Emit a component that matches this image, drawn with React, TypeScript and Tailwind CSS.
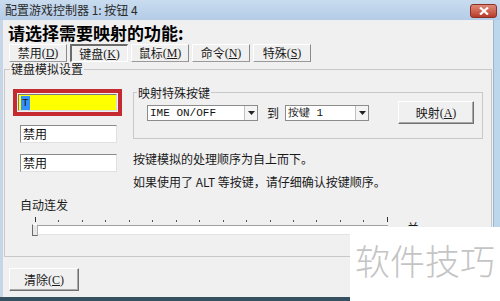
import React from "react";

const cjk = "font-['Noto_Sans_CJK_SC',sans-serif]";

function Acc({ k }: { k: string }) {
  return (
    <span className="font-['Liberation_Serif',serif] text-[12px]">
      (<span className="underline">{k}</span>)
    </span>
  );
}

function Tab({ label, k, active }: { label: string; k: string; active?: boolean }) {
  return (
    <div
      className={
        "w-[58px] h-[18px] flex items-center justify-center whitespace-nowrap text-[12px] leading-[12px] text-[#1a1a1a] " +
        (active
          ? "border-t-2 border-l-2 border-t-[#6a6a6a] border-l-[#6a6a6a] border-b border-r border-b-[#ffffff] border-r-[#ffffff] bg-[#f0f0f0]"
          : "border-t border-l border-t-[#ffffff] border-l-[#ffffff] border-b border-r border-b-[#9a9a9a] border-r-[#8a8a8a] bg-[#f0f0f0]")
      }
    >
      <span>{label}</span>
      <Acc k={k} />
    </div>
  );
}

function Select({ text, w }: { text: string; w: string }) {
  return (
    <div className={"h-[16px] bg-white border border-[#8c8c8c] flex items-center justify-between " + w}>
      <span className="pl-[2px] text-[11px] leading-[12px] font-['Liberation_Mono',monospace] text-[#111] whitespace-nowrap">
        {text}
      </span>
      <div className="w-[13px] h-[14px] border-l border-[#c0c0c0] bg-[#f4f4f4] flex items-center justify-center">
        <svg width="7" height="4" viewBox="0 0 7 4">
          <path d="M0 0 L7 0 L3.5 4 Z" fill="#222" />
        </svg>
      </div>
    </div>
  );
}

function Btn({ label, k, w }: { label: string; k: string; w: string }) {
  return (
    <div
      className={
        "h-[23px] flex items-center justify-center whitespace-nowrap text-[12px] leading-[12px] text-[#1a1a1a] bg-[#f0f0f0] border border-t-[#ffffff] border-l-[#ffffff] border-b-[#707070] border-r-[#707070] shadow-[inset_-1px_-1px_0_#a8a8a8] " +
        w
      }
    >
      <span>{label}</span>
      <Acc k={k} />
    </div>
  );
}

export default function App() {
  const ticks = Array.from({ length: 16 });
  return (
    <div className={"relative w-[500px] h-[301px] overflow-hidden flex flex-col bg-[#f0f0f0] " + cjk}>
      {/* title bar */}
      <div className="h-[20px] flex items-center justify-between bg-gradient-to-b from-[#c9dcef] to-[#b4cce7]">
        <span className="pl-[5px] text-[12px] leading-[12px] text-[#2a2a2a]">配置游戏控制器 1: 按钮 4</span>
        <div className="mr-[3px] mt-[1px] w-[27px] h-[14px] rounded-[3px] border border-[#8a3024] bg-gradient-to-b from-[#e08a78] to-[#b93a2a] flex items-center justify-center">
          <svg width="10" height="8" viewBox="0 0 10 8">
            <path d="M1 0.5 L9 7.5 M9 0.5 L1 7.5" stroke="#ffffff" strokeWidth="2.2" />
          </svg>
        </div>
      </div>

      <div className="flex flex-1">
        <div className="w-[3px] bg-[#c6d6e6]" />
        <div className="flex-1 flex flex-col bg-[#f0f0f0]">
          <div className="pl-[5px] mt-[4px] h-[18px] text-[17px] leading-[18px] font-bold text-[#000] whitespace-nowrap">
            请选择需要映射的功能:
          </div>
          <div className="mt-[2px] pl-[6px] flex gap-[3px]">
            <Tab label="禁用" k="D" />
            <Tab label="键盘" k="K" active />
            <Tab label="鼠标" k="M" />
            <Tab label="命令" k="N" />
            <Tab label="特殊" k="S" />
          </div>

          {/* group box */}
          <div className="mt-[7px] ml-[1px] mr-[1px] h-[188px] border border-[#c8c8c8] flex flex-col">
            <span className="-mt-[8px] ml-[5px] self-start px-[1px] bg-[#f0f0f0] text-[12px] leading-[14px] text-[#1a1a1a]">
              键盘模拟设置
            </span>
            <div className="flex pl-[8px]">
              {/* left column */}
              <div className="w-[109px] flex flex-col mt-[13px]">
                <div className="w-[109px] h-[27px] border-[4px] border-[#c42a30] p-[1px]">
                  <div className="w-full h-full bg-[#ffff00] border border-t-[#7a7a7a] border-l-[#7a7a7a] border-b-[#dcdcdc] border-r-[#dcdcdc] flex items-center pl-[2px]">
                    <span className="bg-[#3390ff] text-[#1a1a1a] text-[11px] leading-[14px] px-[1px] font-['Liberation_Mono',monospace]">T</span>
                  </div>
                </div>
                <div className="mt-[9px] ml-[7px] w-[97px] h-[18px] bg-white border border-t-[#8a8a8a] border-l-[#8a8a8a] border-b-[#e0e0e0] border-r-[#e0e0e0] flex items-center pl-[2px] text-[12px] leading-[12px] text-[#111]">
                  禁用
                </div>
                <div className="mt-[11px] ml-[7px] w-[97px] h-[18px] bg-white border border-t-[#8a8a8a] border-l-[#8a8a8a] border-b-[#e0e0e0] border-r-[#e0e0e0] flex items-center pl-[2px] text-[12px] leading-[12px] text-[#111]">
                  禁用
                </div>
              </div>
              {/* right column */}
              <div className="flex-1 ml-[11px] mr-[8px] flex flex-col">
                <div className="mt-[16px] h-[47px] border border-[#c8c8c8] flex flex-col">
                  <span className="-mt-[7px] ml-[3px] self-start px-[1px] bg-[#f0f0f0] text-[12px] leading-[14px] text-[#1a1a1a]">
                    映射特殊按键
                  </span>
                  <div className="mt-[1px] h-[23px] flex items-center pl-[13px]">
                    <Select text="IME ON/OFF" w="w-[111px]" />
                    <span className="ml-[9px] text-[12px] leading-[12px] text-[#1a1a1a]">到</span>
                    <Select text="按键 1" w="ml-[6px] w-[84px] font-['Noto_Sans_CJK_SC',sans-serif]" />
                    <Btn label="映射" k="A" w="ml-[29px] w-[76px]" />
                  </div>
                </div>
                <div className="mt-[12px] text-[12px] leading-[16px] text-[#1a1a1a] whitespace-nowrap">
                  按键模拟的处理顺序为自上而下。
                </div>
                <div className="mt-[7px] text-[12px] leading-[16px] text-[#1a1a1a] whitespace-nowrap">
                  如果使用了 ALT 等按键，请仔细确认按键顺序。
                </div>
              </div>
            </div>
            <div className="mt-[7px] pl-[15px] text-[12px] leading-[16px] text-[#1a1a1a]">自动连发</div>
            <div className="mt-[3px] ml-[30px] w-[353px] h-[6px] flex justify-between items-end">
              {ticks.map((_, i) => (
                <div
                  key={i}
                  className={
                    i === 0 || i === 15 ? "w-[1px] h-[5px] bg-[#333]" : "w-[1px] h-[2px] bg-[#555]"
                  }
                />
              ))}
            </div>
            <div className="mt-[1px] ml-[27px] flex items-center h-[13px]">
              <div className="w-[6px] h-[12px] bg-[#e8e8e8] border border-t-[#ffffff] border-l-[#6a6a6a] border-b-[#6a6a6a] border-r-[#b0b0b0]" />
              <div className="w-[350px] h-[10px] bg-white border-t border-t-[#a0a0a0] border-b border-b-[#e4e4e4]" />
              <div className="ml-[19px] self-start -mt-[2px] h-[5px] overflow-hidden text-[12px] leading-[14px] text-[#1a1a1a]">
                关
              </div>
            </div>
          </div>

          <div className="mt-[11px] ml-[6px]">
            <Btn label="清除" k="C" w="w-[70px]" />
          </div>
        </div>
        <div className="w-[7px] bg-[#bcd6ec] border-l border-l-[#9fb6cc]" />
      </div>
      <div className="h-[4px] bg-[#35505f]" />

      {/* watermark */}
      <div className="absolute right-0 bottom-0 w-[150px] h-[74px] bg-white flex justify-center pt-[15px]">
        <span className="text-[35px] leading-[35px] font-light text-[#c4c4c4]">软件技巧</span>
      </div>
    </div>
  );
}
